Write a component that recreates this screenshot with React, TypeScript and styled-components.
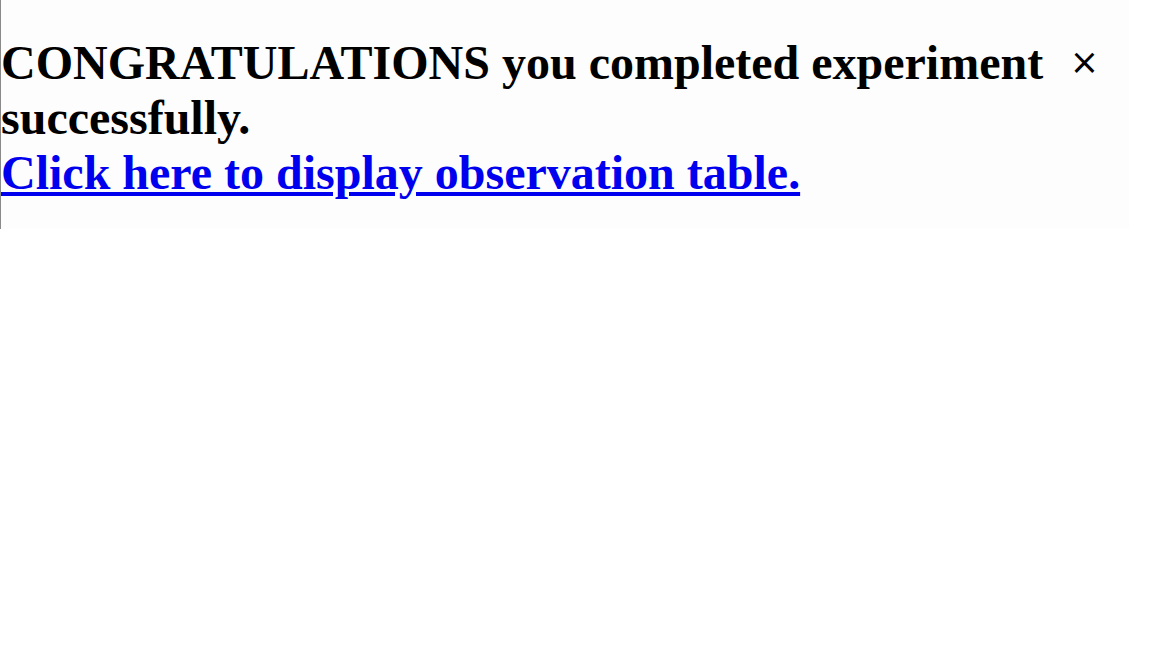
import styled, { createGlobalStyle } from 'styled-components';

const GlobalStyle = createGlobalStyle`
  html, body {
    margin: 0;
    padding: 0;
    background: #ffffff;
  }
  body {
    font-family: "Liberation Serif", "Times New Roman", serif;
  }
`;

const ResultPanel = styled.div`
  width: 1128px;
  background-color: #fdfdfd;
  border-left: 1px solid #8a8a8a;
  overflow: hidden;
`;

const Message = styled.h1`
  margin: 35px 0 29px;
  font-size: 48px;
  font-weight: bold;
  line-height: normal;
  color: #000000;
`;

// close icon sits to the right of the first line
const CloseButton = styled.span`
  float: right;
  margin: 7px 30px 0 0;
  font-weight: normal;
  font-size: 35px;
  font-family: "DejaVu Sans", sans-serif;
  cursor: pointer;
`;

const TableLink = styled.a`
  color: #0000ee;
  text-decoration: underline;
`;

const App = () => (
  <>
    <GlobalStyle />
    <ResultPanel>
      <Message>
        <CloseButton>×</CloseButton>
        CONGRATULATIONS you completed experiment successfully.
        <br />
        <TableLink href="#">Click here to display observation table.</TableLink>
      </Message>
    </ResultPanel>
  </>
);

export default App;
